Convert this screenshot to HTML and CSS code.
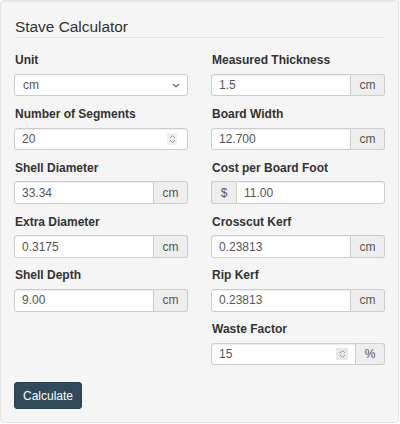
FILE: index.html
```html
<!DOCTYPE html>
<html>
<head>
<meta charset="utf-8">
<link rel="stylesheet" href="styles.css">
</head>
<body>
<div class="well">
  <h4 class="title">Stave Calculator</h4>
  <div class="cols">
    <div class="col">
      <div class="group">
        <label class="lbl">Unit</label>
        <div class="select">
          <span class="val">cm</span>
          <svg class="chev" width="8" height="5" viewBox="0 0 8 5"><path d="M1 1 L4 4 L7 1" fill="none" stroke="#666" stroke-width="1.2"/></svg>
        </div>
      </div>
      <div class="group">
        <label class="lbl">Number of Segments</label>
        <div class="field spin-field">
          <input class="inp" type="text" value="20">
          <span class="spin light"><svg width="7" height="10" viewBox="0 0 7 10"><path d="M1 4 L3.5 1.5 L6 4 M1 6 L3.5 8.5 L6 6" fill="none" stroke="#999" stroke-width="1"/></svg></span>
        </div>
      </div>
      <div class="group">
        <label class="lbl">Shell Diameter</label>
        <div class="field"><input class="inp" type="text" value="33.34"><span class="addon">cm</span></div>
      </div>
      <div class="group">
        <label class="lbl">Extra Diameter</label>
        <div class="field"><input class="inp" type="text" value="0.3175"><span class="addon">cm</span></div>
      </div>
      <div class="group">
        <label class="lbl">Shell Depth</label>
        <div class="field"><input class="inp" type="text" value="9.00"><span class="addon">cm</span></div>
      </div>
    </div>
    <div class="col">
      <div class="group">
        <label class="lbl">Measured Thickness</label>
        <div class="field"><input class="inp" type="text" value="1.5"><span class="addon">cm</span></div>
      </div>
      <div class="group">
        <label class="lbl">Board Width</label>
        <div class="field"><input class="inp" type="text" value="12.700"><span class="addon">cm</span></div>
      </div>
      <div class="group">
        <label class="lbl">Cost per Board Foot</label>
        <div class="field"><span class="addon left">$</span><input class="inp" type="text" value="11.00"></div>
      </div>
      <div class="group">
        <label class="lbl">Crosscut Kerf</label>
        <div class="field"><input class="inp" type="text" value="0.23813"><span class="addon">cm</span></div>
      </div>
      <div class="group">
        <label class="lbl">Rip Kerf</label>
        <div class="field"><input class="inp" type="text" value="0.23813"><span class="addon">cm</span></div>
      </div>
      <div class="group">
        <label class="lbl">Waste Factor</label>
        <div class="field">
          <div class="spin-wrap">
            <input class="inp" type="text" value="15">
            <span class="spin"><svg width="7" height="10" viewBox="0 0 7 10"><path d="M1 4 L3.5 1.5 L6 4 M1 6 L3.5 8.5 L6 6" fill="none" stroke="#999" stroke-width="1"/></svg></span>
          </div>
          <span class="addon pct">%</span>
        </div>
      </div>
    </div>
  </div>
  <button class="btn">Calculate</button>
</div>
</body>
</html>
```
FILE: styles.css
```css
html, body {
  margin: 0;
  padding: 0;
  background: #fff;
}
body {
  font-family: "Liberation Sans", Arial, sans-serif;
  color: #333;
}
.well {
  box-sizing: border-box;
  width: 399px;
  height: 423px;
  background: #f5f5f5;
  border: 1px solid #e3e3e3;
  border-radius: 4px;
  box-shadow: inset 0 1px 1px rgba(0,0,0,0.05);
  padding: 17px 13px 0 13px;
}
.title {
  margin: 0 1px;
  font-size: 15.4px;
  font-weight: normal;
  line-height: 17px;
  padding-bottom: 2px;
  border-bottom: 1px solid #e5e5e5;
  color: #333;
}
.cols {
  display: flex;
  gap: 23px;
  margin-top: 14.3px;
}
.col {
  width: 174px;
  display: flex;
  flex-direction: column;
}
.group {
  margin-bottom: 9.6px;
}
.lbl {
  display: block;
  font-size: 12px;
  font-weight: bold;
  line-height: 17px;
  margin: 0 1px 4.6px;
  color: #333;
}
.select, .field {
  display: flex;
  height: 22.6px;
  position: relative;
}
.select {
  box-sizing: border-box;
  background: #fff;
  border: 1px solid #ccc;
  border-radius: 3px;
  align-items: center;
  padding: 0 7px 0 8px;
  justify-content: space-between;
  font-size: 12px;
  color: #555;
}
.chev { display: block; margin-top: 1px; }
.inp {
  box-sizing: border-box;
  flex: 1;
  min-width: 0;
  width: 10px;
  height: 100%;
  margin: 0;
  border: 1px solid #ccc;
  border-radius: 3px 0 0 3px;
  background: #fff;
  padding: 0 7px;
  font-family: "Liberation Sans", Arial, sans-serif;
  font-size: 12px;
  color: #555;
  box-shadow: inset 0 1px 1px rgba(0,0,0,0.075);
  outline: none;
}
.spin-field .inp { border-radius: 3px; }
.addon {
  box-sizing: border-box;
  flex: 0 0 34px;
  width: 34px;
  display: flex;
  align-items: center;
  justify-content: center;
  background: #eee;
  border: 1px solid #ccc;
  border-left: 0;
  border-radius: 0 3px 3px 0;
  font-size: 12px;
  color: #555;
}
.addon.left {
  flex-basis: 25px;
  width: 25px;
  border-left: 1px solid #ccc;
  border-right: 0;
  border-radius: 3px 0 0 3px;
}
.addon.left + .inp { border-radius: 0 3px 3px 0; }
.addon.pct { flex-basis: 29px; width: 29px; }
.spin-wrap {
  flex: 1;
  min-width: 0;
  display: flex;
  position: relative;
}
.spin-wrap .inp { border-radius: 3px 0 0 3px; }
.spin {
  position: absolute;
  top: 5px;
  right: 8px;
  width: 12px;
  height: 12px;
  background: #e8e8e8;
  display: flex;
  align-items: center;
  justify-content: center;
}
.spin.light {
  right: 11px;
  width: 10px;
  background: #f0f0f0;
}
.spin svg { display: block; }
.btn {
  display: block;
  margin-top: 7.5px;
  height: 27px;
  width: 68px;
  padding: 0;
  border: 1px solid #2a4050;
  border-radius: 3px;
  background: #304a5c;
  color: #fff;
  font-family: "Liberation Sans", Arial, sans-serif;
  font-size: 12px;
}
```
